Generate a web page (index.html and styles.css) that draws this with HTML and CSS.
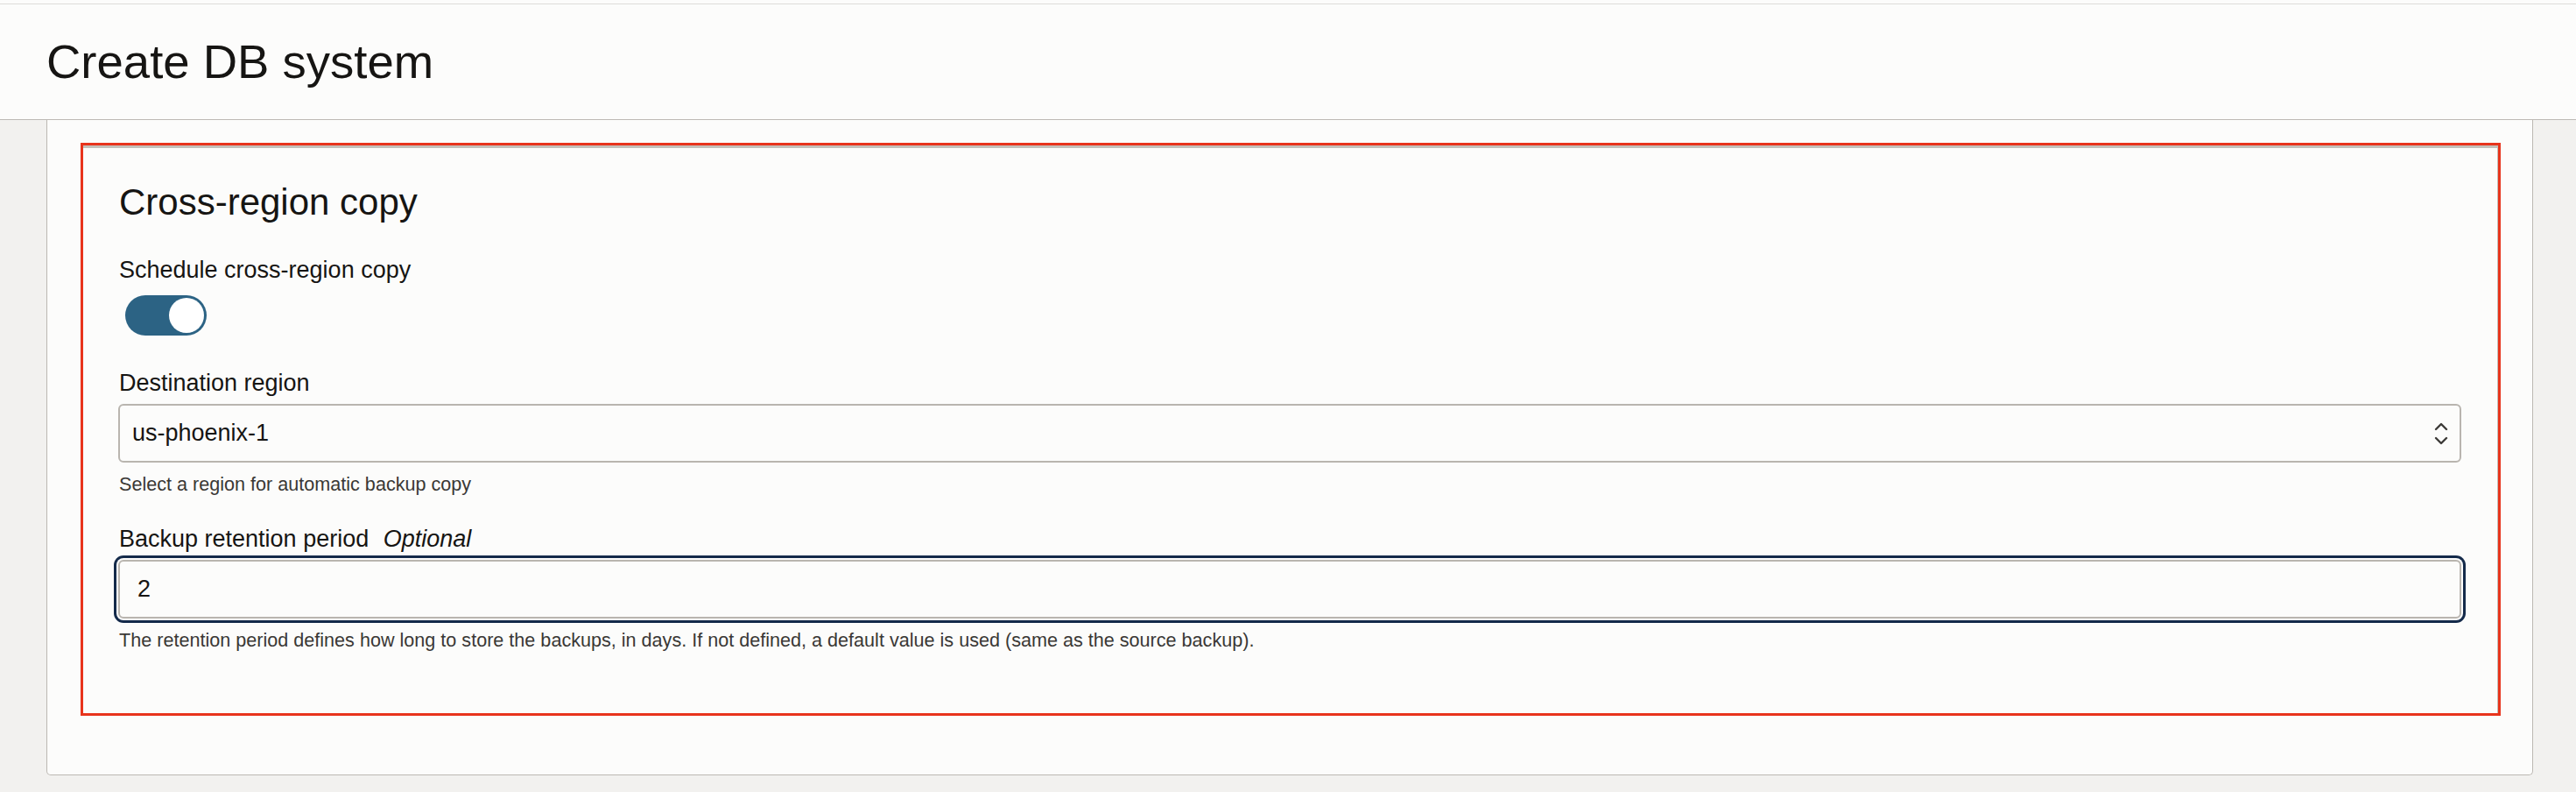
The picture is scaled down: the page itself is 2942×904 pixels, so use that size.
FILE: index.html
```html
<!DOCTYPE html>
<html lang="en">
<head>
<meta charset="utf-8">
<title>Create DB system</title>
<link rel="stylesheet" href="styles.css">
</head>
<body>
  <div class="topline"></div>
  <header class="page-header">
    <h1 class="page-title">Create DB system</h1>
  </header>
  <main class="main">
    <div class="card">
      <section class="section">
        <h2 class="section-title">Cross-region copy</h2>
        <div class="field">
          <div class="label">Schedule cross-region copy</div>
          <div class="toggle" role="switch" aria-checked="true"><span class="knob"></span></div>
        </div>
        <div class="field field-gap">
          <div class="label">Destination region</div>
          <div class="select">
            <span class="select-value">us-phoenix-1</span>
            <svg class="chevrons" width="16" height="28" viewBox="0 0 16 28" aria-hidden="true">
              <path d="M2 9 L8 3 L14 9" fill="none" stroke="#3d3b38" stroke-width="2.4" stroke-linecap="round" stroke-linejoin="round"/>
              <path d="M2 19 L8 25 L14 19" fill="none" stroke="#3d3b38" stroke-width="2.4" stroke-linecap="round" stroke-linejoin="round"/>
            </svg>
          </div>
          <div class="help">Select a region for automatic backup copy</div>
        </div>
        <div class="field field-gap2">
          <div class="label">Backup retention period <span class="optional">Optional</span></div>
          <div class="input focused"><span class="input-value">2</span></div>
          <div class="help">The retention period defines how long to store the backups, in days. If not defined, a default value is used (same as the source backup).</div>
        </div>
      </section>
    </div>
  </main>
</body>
</html>
```

FILE: styles.css
```css
* { box-sizing: border-box; }

html, body {
  margin: 0;
  padding: 0;
}

body {
  background: #f2f1ef;
  font-family: "Liberation Sans", Arial, sans-serif;
  color: #161513;
  width: 2942px;
  height: 904px;
  overflow: hidden;
}

.topline {
  height: 5px;
  background: #fcfcfb;
  border-bottom: 1px solid #dedcd9;
}

.page-header {
  height: 132px;
  background: #fcfcfb;
  border-bottom: 1px solid #bdb9b4;
  display: flex;
  align-items: center;
  padding-left: 53px;
}

.page-title {
  margin: 0;
  font-weight: 400;
  font-size: 54.5px;
  line-height: 64px;
  color: #161513;
}

.main {
  padding: 0 49px 0 53px;
}

.card {
  background: #fcfcfb;
  border: 1px solid #bcb8b2;
  border-top: none;
  border-radius: 0 0 5px 5px;
  padding: 26px 36px 66px 38px;
  height: 748px;
}

.section {
  border: 3px solid #e8341c;
  box-shadow: inset -1px 3px 0 #c3bfb9;
  padding: 40px 42px 68px 40px;
  height: 654px;
}

.section-title {
  margin: 0 0 34px 1px;
  font-weight: 400;
  font-size: 42px;
  line-height: 50px;
}

.label {
  font-size: 27px;
  line-height: 36px;
  margin-left: 1px;
}

.optional {
  font-style: italic;
  margin-left: 9px;
}

.toggle {
  width: 93px;
  height: 46px;
  margin: 11px 0 0 8px;
  background: #2c6384;
  border-radius: 23px;
  padding: 3px;
  display: flex;
  justify-content: flex-end;
}

.knob {
  width: 40px;
  height: 40px;
  border-radius: 50%;
  background: #ffffff;
}

.field-gap { margin-top: 36px; }
.field-gap2 { margin-top: 30px; }

.select,
.input {
  height: 67px;
  margin-top: 6px;
  border: 2px solid #b9b5af;
  border-radius: 6px;
  background: #fcfcfb;
  display: flex;
  align-items: center;
  font-size: 27px;
  color: #161513;
}

.select {
  justify-content: space-between;
  padding: 0 13px 0 14px;
}

.chevrons { display: block; }

.input {
  padding-left: 20px;
  margin-top: 6px;
}

.input.focused {
  box-shadow: 0 0 0 2px #fcfcfb, 0 0 0 5px #142a4a;
}

.help {
  margin-top: 11px;
  margin-left: 1px;
  font-size: 21.6px;
  line-height: 28px;
  color: #3a3835;
}
```
